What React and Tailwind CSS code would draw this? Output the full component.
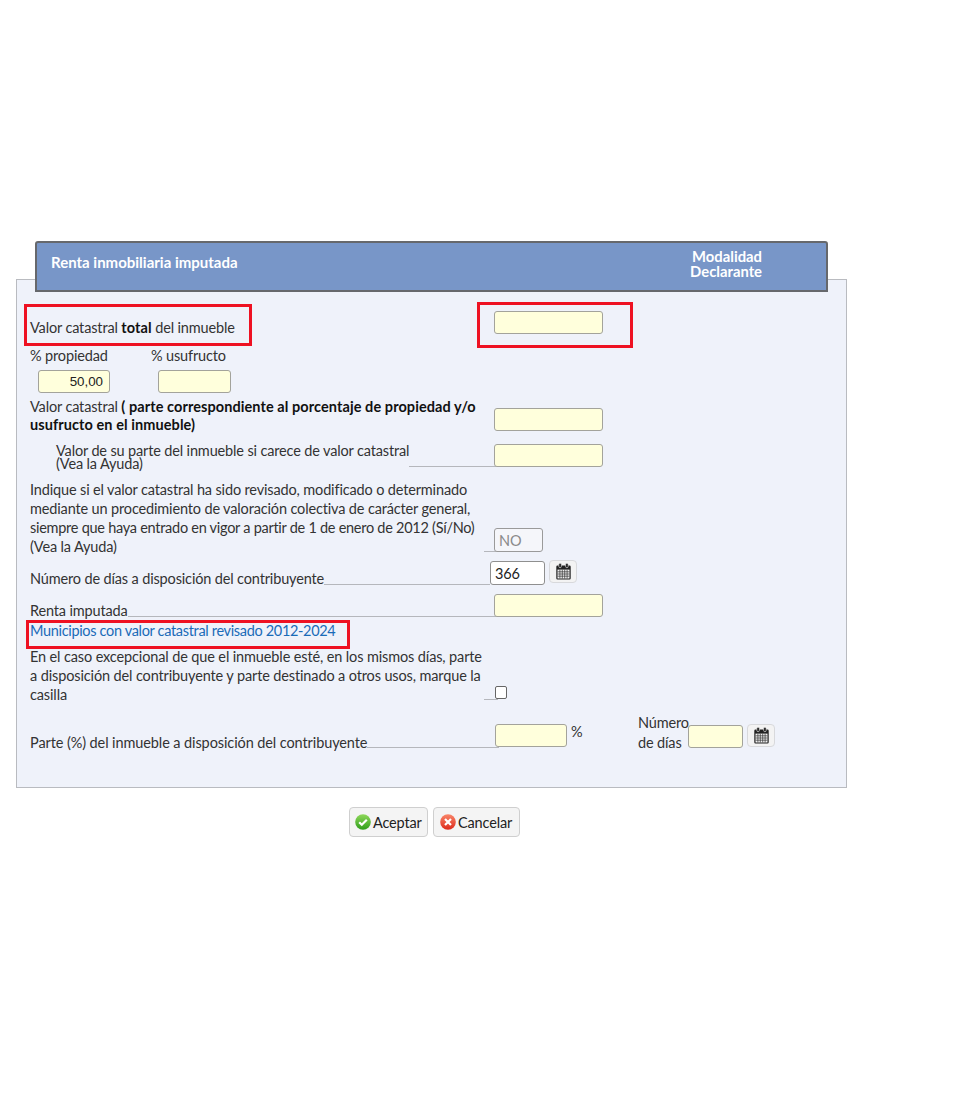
import React from 'react';

const inputCls = 'block h-[23px] rounded-[3px] border border-[#a3a39b] bg-[#ffffdc] box-border';
const boldCls = 'tracking-[0.08px] text-[#111]';

function Leader({ className = '' }) {
  return <div className={`flex-1 border-b border-[#b5b7bc] ${className}`} />;
}

function CalendarIcon() {
  return (
    <svg width="15" height="17" viewBox="0 0 15 17" className="block">
      <path d="M1.5 2.5h12a1.2 1.2 0 0 1 1.2 1.2v11.6a1.2 1.2 0 0 1-1.2 1.2h-12a1.2 1.2 0 0 1-1.2-1.2V3.7a1.2 1.2 0 0 1 1.2-1.2z" fill="#222" />
      <rect x="2.8" y="0.3" width="2.6" height="4.4" rx="1.3" fill="#222" stroke="#f3f3f3" strokeWidth="0.6" />
      <rect x="9.6" y="0.3" width="2.6" height="4.4" rx="1.3" fill="#222" stroke="#f3f3f3" strokeWidth="0.6" />
      <path d="M1.5 6.6h12v8.9h-12z" fill="#f2f2f2" />
      <path d="M1.5 8.8h12M1.5 11h12M1.5 13.2h12M3.9 6.6v8.9M6.3 6.6v8.9M8.7 6.6v8.9M11.1 6.6v8.9" stroke="#333" strokeWidth="0.7" />
    </svg>
  );
}

function CalendarButton() {
  return (
    <button className="flex h-[23px] w-[28px] items-center justify-center rounded-[4px] border border-[#d8d9dc] bg-[#f3f3f3]">
      <CalendarIcon />
    </button>
  );
}

function IconBall({ id, from, to, children }) {
  return (
    <svg width="16" height="16" viewBox="0 0 16 16" className="block shrink-0">
      <defs>
        <linearGradient id={id} x1="0" y1="0" x2="0" y2="1">
          <stop offset="0" stopColor={from} />
          <stop offset="1" stopColor={to} />
        </linearGradient>
      </defs>
      <circle cx="8" cy="8" r="7.8" fill={`url(#${id})`} />
      {children}
    </svg>
  );
}

export default function App() {
  return (
    <div className="min-h-[1094px] bg-white pt-[279px] font-['Lato',sans-serif] text-[14.5px] leading-[19px] tracking-[-0.15px] text-[#333]">
      <div className="relative ml-4 h-[509px] w-[831px] border border-[#b9bbc0] bg-[#eff2fa]">
        <div className="-mt-[39px] ml-[18px] flex h-[51px] w-[793px] items-center justify-between rounded-t-[3px] border-2 border-[#66686c] bg-[#7896c8] pl-[14px] pr-[64px] font-bold tracking-normal text-white">
          <span className="pb-[9px] text-[15px]">Renta inmobiliaria imputada</span>
          <span className="pb-[6px] text-right text-[14.8px] leading-[15px]">
            <span className="block">Modalidad</span>
            <span className="block">Declarante</span>
          </span>
        </div>

        {/* anotaciones en rojo */}
        <div className="absolute left-[7px] top-[24px] h-[42px] w-[228px] border-[3px] border-[#ee1122]" />
        <div className="absolute left-[460px] top-[22px] h-[46px] w-[156px] border-[3px] border-[#ee1122]" />
        <div className="absolute left-[9px] top-[340px] h-[29px] w-[324px] border-[3px] border-[#ee1122]" />

        <div className="pl-[13px]">
          <div className="flex h-[54px] items-start">
            <div className="mt-[26px] w-[464px]">
              Valor catastral <b className={boldCls}>total</b> del inmueble
            </div>
            <input className={`${inputCls} mt-[19px] w-[109px]`} />
          </div>

          <div className="flex">
            <div className="w-[121px]">
              <div>% propiedad</div>
              <div className={`${inputCls} ml-2 mt-[5px] h-[23px] w-[72px] pr-[6px] text-right font-['Liberation_Sans',sans-serif] text-[13.33px] leading-[21px] tracking-normal text-[#222]`}>50,00</div>
            </div>
            <div>
              <div>% usufructo</div>
              <input className={`${inputCls} ml-[7px] mt-[5px] w-[73px]`} />
            </div>
          </div>

          <div className="mt-[5px] flex h-[46px] items-start leading-[18px]">
            <div className="w-[464px]">
              Valor catastral <b className={boldCls}>( parte correspondiente al porcentaje de propiedad y/o usufructo en el inmueble)</b>
            </div>
            <input className={`${inputCls} mt-[10px] w-[109px]`} />
          </div>

          <div className="flex h-[36px] items-start">
            <div className="flex h-[26px] w-[464px]">
              <div className="ml-[26px] whitespace-nowrap leading-[13px]">
                Valor de su parte del inmueble si carece de valor catastral
                <br />
                (Vea la Ayuda)
              </div>
              <Leader className="-mr-[4px] mb-[3px]" />
            </div>
            <input className={`${inputCls} w-[109px]`} />
          </div>

          <div className="flex h-[76px] items-end">
            <div className="flex w-[464px] items-end">
              <div className="w-[454px] whitespace-nowrap">
                Indique si el valor catastral ha sido revisado, modificado o determinado
                <br />
                mediante un procedimiento de valoración colectiva de carácter general,
                <br />
                <span className="tracking-[-0.27px]">siempre que haya entrado en vigor a partir de 1 de enero de 2012 (Sí/No)</span>
                <br />
                (Vea la Ayuda)
              </div>
              <Leader className="-mr-[4px] mb-[4px]" />
            </div>
            <div className="relative mb-[4px] flex h-[24px] w-[49px] items-center rounded-[3px] border border-[#9a9a9a] bg-[#f5f6fa] pl-[4px] text-[#8a8a8a]">NO</div>
          </div>

          <div className="flex h-[33px] items-end">
            <div className="flex w-[460px] items-end">
              <div className="whitespace-nowrap pb-[1px]">Número de días a disposición del contribuyente</div>
              <Leader className="mb-[4px]" />
            </div>
            <div className="mb-[4px] flex h-[24px] w-[55px] items-center rounded-[3px] border border-[#8f8f8f] bg-white pl-[4px] text-[#222]">366</div>
            <div className="mb-[6px] ml-[4px]">
              <CalendarButton />
            </div>
          </div>

          <div className="flex h-[32px] items-end">
            <div className="flex w-[464px] items-end">
              <div className="whitespace-nowrap pb-[1px]">Renta imputada</div>
              <Leader className="-mr-[4px] mb-[4px]" />
            </div>
            <input className={`${inputCls} mb-[4px] w-[109px]`} />
          </div>

          <div className="h-[26px]">
            <a href="#" className="tracking-[-0.33px] text-[#1a6bb8]">Municipios con valor catastral revisado 2012-2024</a>
          </div>

          <div className="flex h-[57px] items-end">
            <div className="flex w-[464px] items-end">
              <div className="w-[454px] whitespace-nowrap tracking-[-0.13px]">
                En el caso excepcional de que el inmueble esté, en los mismos días, parte
                <br />
                a disposición del contribuyente y parte destinado a otros usos, marque la
                <br />
                casilla
              </div>
              <Leader className="-mr-[4px] mb-[4px]" />
            </div>
            <input type="checkbox" className="mb-[5px] ml-[1px] h-[13px] w-[12px] appearance-none rounded-[2px] border border-[#666] bg-white" />
          </div>

          <div className="flex h-[48px] items-end">
            <div className="flex w-[465px] items-end">
              <div className="whitespace-nowrap tracking-[-0.1px]">Parte (%) del inmueble a disposición del contribuyente</div>
              <Leader className="-mr-[4px] mb-[4px]" />
            </div>
            <input className={`${inputCls} mb-[5px] w-[72px]`} />
            <div className="mb-[11px] ml-[4px] w-[67px]">%</div>
            <div className="mb-[-1px] w-[50px] leading-[20px]">
              Número
              <br />
              de días
            </div>
            <input className={`${inputCls} mb-[4px] w-[55px]`} />
            <div className="mb-[5px] ml-[4px]">
              <CalendarButton />
            </div>
          </div>
        </div>
      </div>

      <div className="ml-[349px] mt-[19px] flex gap-[5px] text-[#222]">
        <button className="flex h-[30px] w-[79px] items-center gap-[2px] rounded-[4px] border border-[#cfcfcf] bg-[#f4f4f4] pl-[5px]">
          <IconBall id="ok" from="#8fd85a" to="#2f9e1c">
            <path d="M4.2 8.2l2.6 2.6 5-5" fill="none" stroke="#fff" strokeWidth="2.2" />
          </IconBall>
          Aceptar
        </button>
        <button className="flex h-[30px] w-[87px] items-center gap-[2px] rounded-[4px] border border-[#cfcfcf] bg-[#f4f4f4] pl-[6px]">
          <IconBall id="ko" from="#f9866a" to="#dd2a1a">
            <path d="M5 5l6 6M11 5l-6 6" fill="none" stroke="#fff" strokeWidth="2.2" />
          </IconBall>
          Cancelar
        </button>
      </div>
    </div>
  );
}
